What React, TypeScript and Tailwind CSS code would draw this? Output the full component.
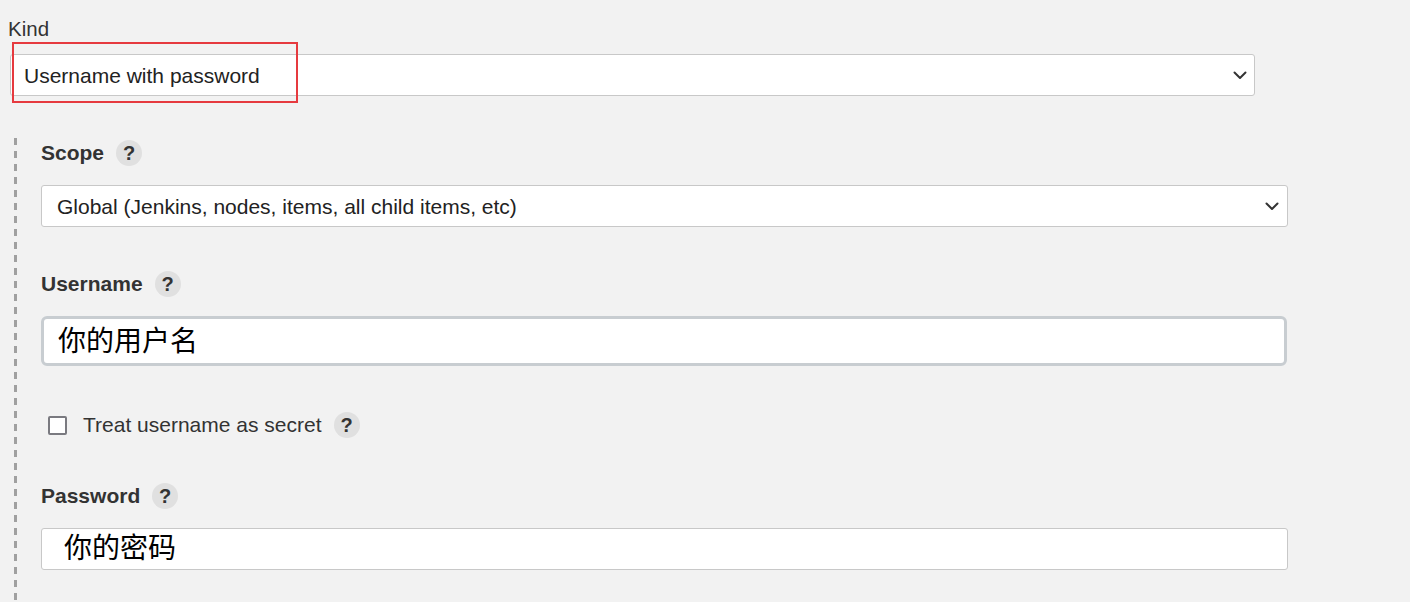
import React from 'react'

const FONT = '"Liberation Sans", Arial, sans-serif'
const CJK = '"Liberation Sans", "Noto Sans CJK SC", sans-serif'

function Chevron() {
  return (
    <svg width="14" height="9" viewBox="0 0 14 9" className="shrink-0">
      <path d="M1.5 1.5 L7 7 L12.5 1.5" fill="none" stroke="#333" strokeWidth="2" strokeLinecap="round" strokeLinejoin="round" />
    </svg>
  )
}

function Help() {
  return (
    <span className="w-[26px] h-[26px] rounded-full bg-[#e0e0e0] text-[#333] font-bold text-[20px] flex items-center justify-center shrink-0">
      ?
    </span>
  )
}

function FakeSelect({ text, className }: { text: string; className: string }) {
  return (
    <div
      className={`h-[42px] bg-white border border-[#c8c8c8] rounded-[3px] flex items-center justify-between text-[21px] text-[#222] ${className}`}
    >
      <span className="pt-[2px]">{text}</span>
      <Chevron />
    </div>
  )
}

function Label({ text }: { text: string }) {
  return (
    <div className="flex items-center gap-3 h-[26px]">
      <span className="font-bold text-[21px] text-[#333]">{text}</span>
      <Help />
    </div>
  )
}

export default function App() {
  return (
    <div className="min-h-screen bg-[#f2f2f2] relative overflow-hidden" style={{ fontFamily: FONT }}>
      <div className="pl-2 pt-[17px] text-[20.5px] leading-[24px] text-[#333]">Kind</div>
      <FakeSelect text="Username with password" className="ml-[10px] mt-[13px] w-[1245px] pl-[13px] pr-[7px]" />

      {/* annotation box */}
      <div className="absolute left-[12px] top-[42px] w-[286px] h-[61px] border-2 border-[#e63a3f]" />

      <div className="flex mt-[42px] ml-[14px]">
        <div className="w-[3px] shrink-0 bg-[repeating-linear-gradient(to_bottom,#a0a0a0_0_7px,transparent_7px_13px)]" />
        <div className="pl-[24px] pt-[2px] pb-10">
          <Label text="Scope" />
          <FakeSelect
            text="Global (Jenkins, nodes, items, all child items, etc)"
            className="mt-[19px] w-[1247px] pl-[15px] pr-[8px]"
          />

          <div className="mt-[44px]">
            <Label text="Username" />
          </div>
          <div
            className="mt-[19px] w-[1246px] h-[50px] bg-white border-[3px] border-[#c8cdd1] rounded-[6px] flex items-center pl-[14px] text-[28px] text-black"
            style={{ fontFamily: CJK }}
          >
            <span className="pt-[2px]">你的用户名</span>
          </div>

          <div className="mt-[46px] flex items-center h-[26px]">
            <span className="ml-[7px] w-[19px] h-[19px] border-2 border-[#7a7a80] rounded-[2px] bg-white shrink-0" />
            <span className="ml-[16px] text-[21px] text-[#333]">Treat username as secret</span>
            <span className="ml-3">
              <Help />
            </span>
          </div>

          <div className="mt-[45px]">
            <Label text="Password" />
          </div>
          <div
            className="mt-[19px] w-[1247px] h-[42px] bg-white border border-[#c8c8c8] rounded-[3px] flex items-center pl-[22px] text-[28px] text-black"
            style={{ fontFamily: CJK }}
          >
            你的密码
          </div>
        </div>
      </div>
    </div>
  )
}
